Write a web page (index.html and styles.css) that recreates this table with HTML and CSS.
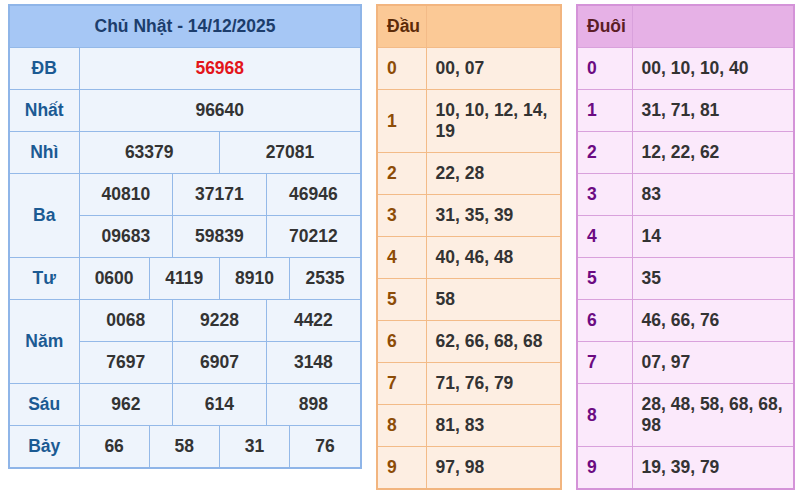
FILE: index.html
```html
<!DOCTYPE html>
<html lang="vi">
<head>
<meta charset="utf-8">
<title>Kết quả xổ số</title>
<link rel="stylesheet" href="styles.css">
</head>
<body>
<div class="page">
  <div class="box box-main">
    <table class="kq">
      <colgroup>
        <col class="c-label">
        <col><col><col><col><col><col><col><col><col><col><col><col>
      </colgroup>
      <thead>
        <tr><th colspan="13" class="title">Chủ Nhật - 14/12/2025</th></tr>
      </thead>
      <tbody>
        <tr><td class="lbl">ĐB</td><td colspan="12" class="db">56968</td></tr>
        <tr><td class="lbl">Nhất</td><td colspan="12">96640</td></tr>
        <tr><td class="lbl">Nhì</td><td colspan="6">63379</td><td colspan="6">27081</td></tr>
        <tr><td class="lbl" rowspan="2">Ba</td><td colspan="4">40810</td><td colspan="4">37171</td><td colspan="4">46946</td></tr>
        <tr><td colspan="4">09683</td><td colspan="4">59839</td><td colspan="4">70212</td></tr>
        <tr><td class="lbl">Tư</td><td colspan="3">0600</td><td colspan="3">4119</td><td colspan="3">8910</td><td colspan="3">2535</td></tr>
        <tr><td class="lbl" rowspan="2">Năm</td><td colspan="4">0068</td><td colspan="4">9228</td><td colspan="4">4422</td></tr>
        <tr><td colspan="4">7697</td><td colspan="4">6907</td><td colspan="4">3148</td></tr>
        <tr><td class="lbl">Sáu</td><td colspan="4">962</td><td colspan="4">614</td><td colspan="4">898</td></tr>
        <tr><td class="lbl">Bảy</td><td colspan="3">66</td><td colspan="3">58</td><td colspan="3">31</td><td colspan="3">76</td></tr>
      </tbody>
    </table>
  </div>

  <div class="box box-dau">
    <table class="lt">
      <colgroup><col class="c-dau"><col></colgroup>
      <thead><tr><th>Đầu</th><th></th></tr></thead>
      <tbody>
        <tr><td class="k">0</td><td>00, 07</td></tr>
        <tr><td class="k">1</td><td>10, 10, 12, 14, 19</td></tr>
        <tr><td class="k">2</td><td>22, 28</td></tr>
        <tr><td class="k">3</td><td>31, 35, 39</td></tr>
        <tr><td class="k">4</td><td>40, 46, 48</td></tr>
        <tr><td class="k">5</td><td>58</td></tr>
        <tr><td class="k">6</td><td>62, 66, 68, 68</td></tr>
        <tr><td class="k">7</td><td>71, 76, 79</td></tr>
        <tr><td class="k">8</td><td>81, 83</td></tr>
        <tr><td class="k">9</td><td>97, 98</td></tr>
      </tbody>
    </table>
  </div>

  <div class="box box-duoi">
    <table class="lt">
      <colgroup><col class="c-duoi"><col></colgroup>
      <thead><tr><th>Đuôi</th><th></th></tr></thead>
      <tbody>
        <tr><td class="k">0</td><td>00, 10, 10, 40</td></tr>
        <tr><td class="k">1</td><td>31, 71, 81</td></tr>
        <tr><td class="k">2</td><td>12, 22, 62</td></tr>
        <tr><td class="k">3</td><td>83</td></tr>
        <tr><td class="k">4</td><td>14</td></tr>
        <tr><td class="k">5</td><td>35</td></tr>
        <tr><td class="k">6</td><td>46, 66, 76</td></tr>
        <tr><td class="k">7</td><td>07, 97</td></tr>
        <tr><td class="k">8</td><td>28, 48, 58, 68, 68, 98</td></tr>
        <tr><td class="k">9</td><td>19, 39, 79</td></tr>
      </tbody>
    </table>
  </div>
</div>
</body>
</html>
```

FILE: styles.css
```css
html, body {
  margin: 0;
  padding: 0;
  background: #ffffff;
}

body {
  font-family: "Liberation Sans", Arial, sans-serif;
  font-size: 17.5px;
  font-weight: bold;
  color: #333333;
}

.page {
  display: flex;
  align-items: flex-start;
  gap: 14px;
  padding: 4px 0 0 8px;
}

.box {
  box-sizing: border-box;
  border: 2px solid;
}

.box table {
  width: 100%;
  border-collapse: collapse;
  border-style: hidden;
  table-layout: fixed;
}

th, td {
  padding: 10px 0;
  line-height: 21px;
  font-weight: bold;
}

/* main results */
.box-main {
  width: 354px;
  border-color: #8fb5e8;
  background: #eef4fc;
}

.kq .c-label {
  width: 69px;
}

.kq th, .kq td {
  border: 1px solid #94b9e8;
  text-align: center;
}

.kq .title {
  background: #a6c7f5;
  color: #1c3d6c;
}

.kq .lbl {
  color: #1b5a93;
}

.kq .db {
  color: #e3151a;
}

/* loto tables */
.lt th, .lt td {
  text-align: left;
  padding-left: 9px;
  padding-right: 4px;
}

.box-dau {
  width: 186px;
  border-color: #f2b57f;
  background: #fdeee2;
}

.box-dau .c-dau {
  width: 48px;
}

.box-dau th, .box-dau td {
  border: 1px solid #f3bb88;
}

.box-dau th {
  background: #fbc996;
  color: #5c2b08;
}

.box-dau .k {
  color: #8d4c07;
}

.box-duoi {
  width: 219px;
  border-color: #d493d8;
  background: #fbe9fb;
}

.box-duoi .c-duoi {
  width: 54px;
}

.box-duoi th, .box-duoi td {
  border: 1px solid #d9a1dc;
}

.box-duoi th {
  background: #e6b1e6;
  color: #5b1d25;
}

.box-duoi .k {
  color: #6c0b82;
}
```
